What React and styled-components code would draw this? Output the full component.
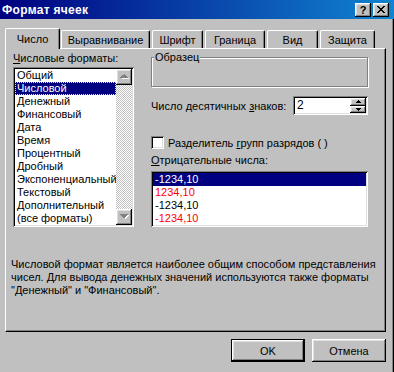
import React from "react";
import styled, { createGlobalStyle } from "styled-components";

const GlobalStyle = createGlobalStyle`
  html, body { margin: 0; padding: 0; background: #c0c0c0; }
  body {
    font-family: "Liberation Sans", Arial, sans-serif;
    font-size: 11px;
    color: #000;
  }
`;

const raised = `
  box-shadow: inset -1px -1px #000, inset 1px 1px #fff,
    inset -2px -2px #808080, inset 2px 2px #dfdfdf;
`;

const sunken = `
  box-shadow: inset 1px 1px #808080, inset -1px -1px #fff,
    inset 2px 2px #000, inset -2px -2px #dfdfdf;
`;

const Window = styled.div`
  width: 394px;
  height: 372px;
  box-sizing: border-box;
  background: #c0c0c0;
  box-shadow: inset -1px 0 #000, inset -2px 0 #808080;
  display: flex;
  flex-direction: column;
  overflow: hidden;
`;

const TitleBar = styled.div`
  height: 19px;
  flex: none;
  display: flex;
  align-items: center;
  justify-content: space-between;
  padding: 0 5px 0 2px;
  background: linear-gradient(to right, #000080, #1084d0);
`;

const Title = styled.span`
  color: #fff;
  font-weight: bold;
  font-size: 12px;
  letter-spacing: 0.3px;
`;

const TitleButtons = styled.div`
  display: flex;
  gap: 2px;
`;

const TitleButton = styled.div`
  width: 16px;
  height: 14px;
  box-sizing: border-box;
  background: #c0c0c0;
  ${raised}
  display: flex;
  align-items: center;
  justify-content: center;
  font-weight: bold;
  font-size: 11px;
  line-height: 14px;
`;

const Body = styled.div`
  padding: 9px 0 0 5px;
  display: flex;
  flex-direction: column;
`;

const TabRow = styled.div`
  display: flex;
  align-items: flex-end;
  height: 20px;
  position: relative;
  z-index: 1;
`;

const Tab = styled.div`
  box-sizing: border-box;
  width: ${(p) => p.$w}px;
  height: ${(p) => (p.$active ? 21 : 18)}px;
  margin-right: ${(p) => p.$gap}px;
  margin-bottom: ${(p) => (p.$active ? -1 : 0)}px;
  background: #c0c0c0;
  border-top: 1px solid #fff;
  border-left: 1px solid #fff;
  border-right: 1px solid #000;
  border-radius: 2px 2px 0 0;
  box-shadow: inset -1px 0 #808080;
  display: flex;
  align-items: center;
  justify-content: center;
  padding-bottom: ${(p) => (p.$active ? 1 : 0)}px;
`;

const Panel = styled.div`
  width: 381px;
  height: 284px;
  box-sizing: border-box;
  border-top: 1px solid #fff;
  border-left: 1px solid #fff;
  border-right: 1px solid #000;
  border-bottom: 1px solid #000;
  box-shadow: inset -1px -1px #808080;
  padding: 3px 0 0 5px;
  display: flex;
  flex-direction: column;
`;

const Columns = styled.div`
  display: grid;
  grid-template-columns: 121px 217px;
  column-gap: 17px;
  padding-left: 2px;
  flex: none;
`;

const Column = styled.div`
  display: flex;
  flex-direction: column;
`;

const Label = styled.div`
  line-height: 13px;
  height: 13px;
  white-space: nowrap;
  margin-top: ${(p) => p.$mt || 0}px;
`;

const ListBox = styled.div`
  box-sizing: border-box;
  height: ${(p) => p.$h}px;
  flex: none;
  margin-top: ${(p) => p.$mt}px;
  background: #fff;
  padding: 2px;
  ${sunken}
  display: flex;
`;

const Items = styled.div`
  flex: 1;
  display: flex;
  flex-direction: column;
  min-width: 0;
  overflow: hidden;
`;

const Item = styled.div`
  height: 13px;
  line-height: 13px;
  padding-left: 2px;
  white-space: nowrap;
  box-sizing: border-box;
  flex: none;
  color: ${(p) => (p.$selected ? "#fff" : p.$red ? "#ff0000" : "#000")};
  background: ${(p) => (p.$selected ? "#000080" : "transparent")};
  outline: ${(p) => (p.$focus ? "1px dotted #ffff00" : "none")};
  outline-offset: -1px;
`;

const ScrollBar = styled.div`
  width: 16px;
  display: flex;
  flex-direction: column;
  background-color: #fff;
  background-image: repeating-conic-gradient(#c0c0c0 0% 25%, #fff 0% 50%);
  background-size: 2px 2px;
`;

const ScrollButton = styled.div`
  width: 16px;
  height: 16px;
  box-sizing: border-box;
  background: #c0c0c0;
  ${raised}
  display: flex;
  align-items: center;
  justify-content: center;
  flex: none;
`;

const Track = styled.div`
  flex: 1;
`;

const GroupBox = styled.fieldset`
  margin: -1px 0 0 0;
  padding: 0;
  border: 1px solid #808080;
  box-shadow: 1px 1px #fff, inset 1px 1px #fff;
  height: 34px;
`;

const Legend = styled.legend`
  padding: 0 1px;
  margin-left: 2px;
  line-height: 13px;
  background: #c0c0c0;
`;

const SpinRow = styled.div`
  display: flex;
  align-items: center;
  justify-content: space-between;
  margin-top: 9px;
`;

const SpinBox = styled.div`
  width: 75px;
  height: 19px;
  box-sizing: border-box;
  background: #fff;
  padding: 2px;
  ${sunken}
  display: flex;
  align-items: stretch;
`;

const SpinValue = styled.div`
  flex: 1;
  padding-left: 2px;
  line-height: 15px;
  font-size: 12px;
`;

const SpinButtons = styled.div`
  width: 16px;
  display: flex;
  flex-direction: column;
`;

const SpinButton = styled.div`
  flex: 1;
  box-sizing: border-box;
  background: #c0c0c0;
  ${raised}
  display: flex;
  align-items: center;
  justify-content: center;
`;

const CheckRow = styled.div`
  display: flex;
  align-items: center;
  gap: 4px;
  margin-top: 21px;
`;

const CheckBox = styled.div`
  width: 13px;
  height: 13px;
  box-sizing: border-box;
  background: #fff;
  ${sunken}
`;

const Description = styled.div`
  margin-top: 31px;
  line-height: 13px;
  white-space: nowrap;
  flex: none;
`;

const ButtonRow = styled.div`
  display: flex;
  justify-content: flex-end;
  gap: 7px;
  margin-top: 7px;
  padding-right: 8px;
`;

const Button = styled.div`
  width: 74px;
  height: 23px;
  box-sizing: border-box;
  background: #c0c0c0;
  display: flex;
  align-items: center;
  justify-content: center;
  ${(p) =>
    p.$default
      ? `box-shadow: inset 0 0 0 1px #000, inset -2px -2px #000, inset 2px 2px #fff,
          inset -3px -3px #808080, inset 3px 3px #dfdfdf;`
      : raised}
`;

const Arrow = ({ up, disabled }) => (
  <svg width="9" height="6" viewBox="0 0 9 6" shapeRendering="crispEdges">
    {disabled && (
      <path
        d={up ? "M5 1h1v1h1v1h1v1h1v1H1z" : "M2 1h7v1h-1v1h-1v1h-1v1h-1z"}
        fill="#fff"
      />
    )}
    <path
      d={up ? "M4 0h1v1h1v1h1v1h1v1H0V3h1V2h1V1h2z" : "M0 0h8v1h-1v1h-1v1h-1v1H3V3H2V2H1V1H0z"}
      fill={disabled ? "#808080" : "#000"}
    />
  </svg>
);

const formats = [
  "Общий",
  "Числовой",
  "Денежный",
  "Финансовый",
  "Дата",
  "Время",
  "Процентный",
  "Дробный",
  "Экспоненциальный",
  "Текстовый",
  "Дополнительный",
  "(все форматы)",
];

const negatives = [
  { text: "-1234,10", selected: true },
  { text: "1234,10", red: true },
  { text: "-1234,10" },
  { text: "-1234,10", red: true },
];

const tabs = [
  { label: "Число", w: 55, gap: 1, active: true },
  { label: "Выравнивание", w: 89, gap: 2 },
  { label: "Шрифт", w: 51, gap: 2 },
  { label: "Граница", w: 60, gap: 2 },
  { label: "Вид", w: 51, gap: 2 },
  { label: "Защита", w: 55, gap: 0 },
];

export default function App() {
  return (
    <>
      <GlobalStyle />
      <Window>
        <TitleBar>
          <Title>Формат ячеек</Title>
          <TitleButtons>
            <TitleButton>?</TitleButton>
            <TitleButton>
              <svg width="8" height="7" viewBox="0 0 8 7" shapeRendering="crispEdges">
                <path
                  d="M0 0h2v1h1v1h2V1h1V0h2v1H7v1H6v1H5v1h1v1h1v1h1v1H6V6H5V5H3v1H2v1H0V6h1V5h1V4h1V3H2V2H1V1H0z"
                  fill="#000"
                />
              </svg>
            </TitleButton>
          </TitleButtons>
        </TitleBar>
        <Body>
          <TabRow>
            {tabs.map((t) => (
              <Tab key={t.label} $w={t.w} $gap={t.gap} $active={t.active}>
                {t.label}
              </Tab>
            ))}
          </TabRow>
          <Panel>
            <Columns>
              <Column>
                <Label>
                  <u>Ч</u>исловые форматы:
                </Label>
                <ListBox $h={160} $mt={2}>
                  <Items>
                    {formats.map((f, i) => (
                      <Item key={f} $selected={i === 1} $focus={i === 1}>
                        {f}
                      </Item>
                    ))}
                  </Items>
                  <ScrollBar>
                    <ScrollButton>
                      <Arrow up disabled />
                    </ScrollButton>
                    <Track />
                    <ScrollButton>
                      <Arrow disabled />
                    </ScrollButton>
                  </ScrollBar>
                </ListBox>
              </Column>
              <Column>
                <GroupBox>
                  <Legend>Образец</Legend>
                </GroupBox>
                <SpinRow>
                  <span>
                    Число десятичных <u>з</u>наков:
                  </span>
                  <SpinBox>
                    <SpinValue>2</SpinValue>
                    <SpinButtons>
                      <SpinButton>
                        <svg width="5" height="3" viewBox="0 0 5 3" shapeRendering="crispEdges">
                          <path d="M2 0h1v1h1v1h1v1H0V2h1V1h1z" fill="#000" />
                        </svg>
                      </SpinButton>
                      <SpinButton>
                        <svg width="5" height="3" viewBox="0 0 5 3" shapeRendering="crispEdges">
                          <path d="M0 0h5v1H4v1H3v1H2V2H1V1H0z" fill="#000" />
                        </svg>
                      </SpinButton>
                    </SpinButtons>
                  </SpinBox>
                </SpinRow>
                <CheckRow>
                  <CheckBox />
                  <span>
                    Разделитель <u>г</u>рупп разрядов ( )
                  </span>
                </CheckRow>
                <Label $mt={5}>
                  <u>О</u>трицательные числа:
                </Label>
                <ListBox $h={56} $mt={4}>
                  <Items>
                    {negatives.map((n, i) => (
                      <Item key={i} $selected={n.selected} $red={n.red}>
                        {n.text}
                      </Item>
                    ))}
                  </Items>
                </ListBox>
              </Column>
            </Columns>
            <Description>
              Числовой формат является наиболее общим способом представления
              <br />
              чисел. Для вывода денежных значений используются также форматы
              <br />
              "Денежный" и "Финансовый".
            </Description>
          </Panel>
          <ButtonRow>
            <Button $default>OK</Button>
            <Button>Отмена</Button>
          </ButtonRow>
        </Body>
      </Window>
    </>
  );
}
